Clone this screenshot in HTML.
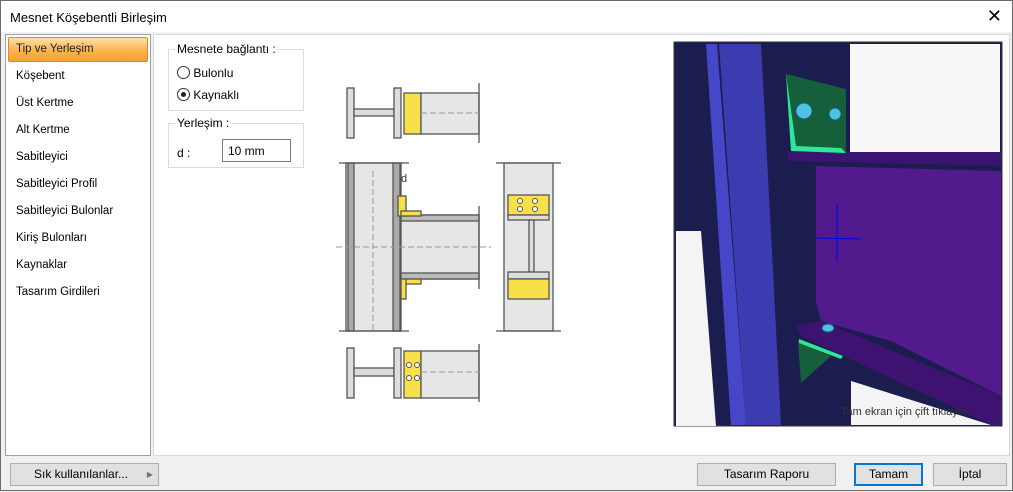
<!DOCTYPE html>
<html><head><meta charset="utf-8"><style>
*{margin:0;padding:0;box-sizing:border-box}
body{width:1013px;height:491px;overflow:hidden;background:#f0f0f0;font-family:"Liberation Sans",sans-serif;font-size:12px;color:#000;position:relative}
.win{position:absolute;left:0;top:0;width:1013px;height:491px;border:1px solid #6b6b6b;background:#f0f0f0}
.title{position:absolute;left:0;top:0;width:1011px;height:31px;background:#fff}
.title span{position:absolute;left:9px;top:9px;font-size:13px}
.close{position:absolute;right:10px;top:5px;font-size:18px}
.list{position:absolute;left:4px;top:33px;width:146px;height:422px;background:#fff;border:1px solid #a0a0a0}
.item{position:absolute;left:10px;font-size:11.5px}
.sel{position:absolute;left:2px;top:2px;width:140px;height:25px;border:1px solid #e08a20;border-radius:2px;background:linear-gradient(#fde0a8,#f9b44e 55%,#f4a030)}
.main{position:absolute;left:152px;top:33px;width:857px;height:422px;background:#fff;border:1px solid #d8d8d8}
.grp{position:absolute;border:1px solid #dcdcdc}
.lg{position:absolute;top:-8px;left:6px;background:#fff;padding:0 2px;font-size:12px}
.btn{position:absolute;top:462px;height:23px;background:#e1e1e1;border:1px solid #adadad;text-align:center;line-height:21px;font-size:12px}
</style></head><body><div class="win">
<div class="title"><span>Mesnet Köşebentli Birleşim</span><div class="close">✕</div></div>
<div class="list">
<div class="sel"></div>
<div class="item" style="top:8px;color:#222">Tip ve Yerleşim</div>
<div class="item" style="top:35px">Köşebent</div>
<div class="item" style="top:62px">Üst Kertme</div>
<div class="item" style="top:89px">Alt Kertme</div>
<div class="item" style="top:116px">Sabitleyici</div>
<div class="item" style="top:143px">Sabitleyici Profil</div>
<div class="item" style="top:170px">Sabitleyici Bulonlar</div>
<div class="item" style="top:197px">Kiriş Bulonları</div>
<div class="item" style="top:224px">Kaynaklar</div>
<div class="item" style="top:251px">Tasarım Girdileri</div>
</div>
<div class="main">
<div class="grp" style="left:14px;top:14px;width:136px;height:62px"><div class="lg">Mesnete bağlantı :</div>
<div style="position:absolute;left:8px;top:16px"><span style="display:inline-block;width:13px;height:13px;border:1px solid #333;border-radius:50%;vertical-align:-2px"></span> Bulonlu</div>
<div style="position:absolute;left:8px;top:38px"><span style="display:inline-block;width:13px;height:13px;border:1px solid #333;border-radius:50%;vertical-align:-2px;position:relative"><span style="position:absolute;left:3px;top:3px;width:5px;height:5px;background:#222;border-radius:50%"></span></span> Kaynaklı</div>
</div>
<div class="grp" style="left:14px;top:88px;width:136px;height:45px"><div class="lg">Yerleşim :</div>
<div style="position:absolute;left:8px;top:22px">d :</div>
<div style="position:absolute;left:53px;top:15px;width:69px;height:23px;border:1px solid #7a7a7a;padding:4px 5px">10 mm</div>
</div>
</div>
<svg style="position:absolute;left:0;top:0" width="1013" height="491">
<g stroke="#555" stroke-width="1.3">
<rect x="346" y="87" width="7" height="50" fill="#ddd"/>
<rect x="353" y="108" width="40" height="7" fill="#ddd"/>
<rect x="393" y="87" width="7" height="50" fill="#ddd"/>
<rect x="403" y="92" width="17" height="41" fill="#f7e04a"/>
<rect x="420" y="92" width="58" height="41" fill="#e6e6e6"/>
<line x1="478" y1="82" x2="478" y2="142"/>
<rect x="345" y="162" width="55" height="168" fill="#e6e6e6"/>
<rect x="347" y="162" width="6" height="168" fill="#aaa"/>
<rect x="392" y="162" width="7" height="168" fill="#aaa"/>
<line x1="338" y1="162" x2="408" y2="162"/><line x1="338" y1="330" x2="408" y2="330"/>
<rect x="400" y="214" width="78" height="64" fill="#e6e6e6"/>
<rect x="400" y="214" width="78" height="6" fill="#bbb"/>
<rect x="400" y="272" width="78" height="6" fill="#bbb"/>
<line x1="478" y1="205" x2="478" y2="288"/>
<rect x="397" y="195" width="8" height="20" fill="#f7e04a"/>
<rect x="400" y="210" width="20" height="5" fill="#f7e04a"/>
<rect x="400" y="278" width="20" height="5" fill="#f7e04a"/>
<rect x="400" y="278" width="5" height="20" fill="#f7e04a"/>
<rect x="503" y="162" width="49" height="168" fill="#e6e6e6"/>
<line x1="495" y1="162" x2="560" y2="162"/><line x1="495" y1="330" x2="560" y2="330"/>
<rect x="507" y="194" width="41" height="20" fill="#f7e04a"/>
<rect x="507" y="214" width="41" height="5" fill="#ddd"/>
<rect x="528" y="219" width="5" height="52" fill="#ddd"/>
<rect x="507" y="271" width="41" height="7" fill="#ddd"/>
<rect x="507" y="278" width="41" height="20" fill="#f7e04a"/>
<rect x="346" y="347" width="7" height="50" fill="#ddd"/>
<rect x="353" y="367" width="40" height="8" fill="#ddd"/>
<rect x="393" y="347" width="7" height="50" fill="#ddd"/>
<rect x="403" y="350" width="17" height="47" fill="#f7e04a"/>
<rect x="420" y="350" width="58" height="47" fill="#e6e6e6"/>
<line x1="478" y1="343" x2="478" y2="401"/>
</g>
<g fill="#fff" stroke="#555"><circle cx="519" cy="200" r="2.5"/><circle cx="534" cy="200" r="2.5"/><circle cx="519" cy="208" r="2.5"/><circle cx="534" cy="208" r="2.5"/>
<circle cx="408" cy="364" r="2.5"/><circle cx="416" cy="364" r="2.5"/><circle cx="408" cy="377" r="2.5"/><circle cx="416" cy="377" r="2.5"/></g>
<g stroke="#999" stroke-dasharray="6 3" stroke-width="1"><line x1="335" y1="246" x2="490" y2="246"/><line x1="372" y1="170" x2="372" y2="330"/><line x1="420" y1="112" x2="478" y2="112"/><line x1="420" y1="371" x2="478" y2="371"/></g>
<text x="400" y="181" font-size="11" fill="#333">d</text>
<rect x="673" y="41" width="328" height="384" fill="#1c1d4f" stroke="#333"/>
<rect x="849" y="43" width="150" height="110" fill="#f7f7f7"/>
<polygon points="675,230 675,425 715,425 700,230" fill="#f4f4f4"/>
<polygon points="850,380 990,424 850,424" fill="#f4f4f4"/>
<polygon points="705,43 716,43 745,424 730,424" fill="#4646c8"/>
<polygon points="718,43 760,43 780,424 745,424" fill="#3c3cb0"/>
<polygon points="787,151 1000,151 1000,165 787,160" fill="#3a1470"/>
<polygon points="815,165 1000,170 1000,395 890,340 820,320 815,300" fill="#521a8c"/>
<polygon points="795,325 820,320 1000,395 1000,424 990,424 800,335" fill="#3d1270"/>
<polygon points="785,73 845,88 845,152 790,150" fill="#155f3a"/>
<polygon points="785,73 790,150 845,152 840,147 795,145" fill="#2ee89a"/>
<polygon points="797,340 830,355 800,382" fill="#155f3a"/>
<polygon points="798,338 842,355 840,358 798,342" fill="#2ee89a"/>
<g fill="#4fc2e0" stroke="#1a5a80"><circle cx="803" cy="110" r="8"/><circle cx="834" cy="113" r="6"/><ellipse cx="827" cy="327" rx="6" ry="4"/></g>
<g stroke="#0000ff"><line x1="836" y1="203" x2="836" y2="261"/><line x1="815" y1="237" x2="860" y2="238"/></g>
<text x="840" y="414" font-size="11" fill="#333">Tam ekran için çift tıklayın.</text>
</svg>
<div class="btn" style="left:9px;width:149px;text-align:left;padding-left:23px">Sık kullanılanlar...<span style="position:absolute;right:5px;font-size:8px;color:#777">▶</span></div>
<div class="btn" style="left:696px;width:139px">Tasarım Raporu</div>
<div class="btn" style="left:853px;width:69px;border:2px solid #0078d7;line-height:19px">Tamam</div>
<div class="btn" style="left:932px;width:74px">İptal</div>
</div></body></html>
